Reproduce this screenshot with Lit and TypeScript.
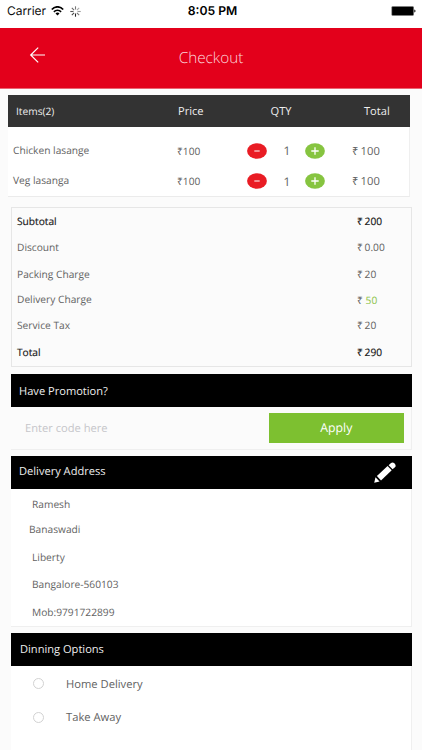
import { LitElement, html, css, svg } from "lit";
import { customElement } from "lit/decorators.js";

interface Item { name: string; price: string; qty: number; total: string; }
interface Charge { label: string; amount: string; strong?: boolean; green?: boolean; }

const items: Item[] = [
  { name: "Chicken lasange", price: "₹100", qty: 1, total: "100" },
  { name: "Veg lasanga", price: "₹100", qty: 1, total: "100" },
];

const charges: Charge[] = [
  { label: "Subtotal", amount: "200", strong: true },
  { label: "Discount", amount: "0.00" },
  { label: "Packing Charge", amount: "20" },
  { label: "Delivery Charge", amount: "50", green: true },
  { label: "Service Tax", amount: "20" },
  { label: "Total", amount: "290", strong: true },
];

const spokes = [0, 45, 90, 135, 180, 225, 270, 315];
const spokeShade = ["#777", "#aaa", "#999", "#777", "#222", "#444", "#555", "#666"];

@customElement("status-bar")
class StatusBar extends LitElement {
  static styles = css`
    :host { display: grid; grid-template-columns: 1fr auto 1fr; align-items: center; height: 28px; padding: 0 6px 6px 7px; box-sizing: border-box; background: #fff; color: #111; font: 12px/16px Inter, sans-serif; }
    .left { display: flex; align-items: center; }
    .carrier { letter-spacing: -0.05px; }
    .wifi { margin-left: 5px; }
    .spin { margin-left: 6px; }
    .time { font-weight: 600; font-size: 12.2px; color: #000; padding-left: 2px; }
    .battery { justify-self: end; }
    svg { display: block; }
  `;
  render() {
    return html`
      <div class="left">
        <span class="carrier">Carrier</span>
        <svg class="wifi" width="13" height="10" viewBox="0 0 13 10">
          <g fill="none" stroke="#000" stroke-width="1.7">
            <path d="M.8 3.5C4-.1 9-.1 12.2 3.5"/>
            <path d="M2.9 5.8c2-2.1 5.2-2.1 7.2 0"/>
          </g>
          <path d="M6.5 9.6 4.5 7.4c1.1-1.1 2.9-1.1 4 0z"/>
        </svg>
        <svg class="spin" width="11" height="11" viewBox="0 0 11 11">
          ${spokes.map((a, i) => svg`<path d="M5.5 .3V3.5" stroke=${spokeShade[i]} stroke-width="1.1" transform="rotate(${a} 5.5 5.5)"/>`)}
        </svg>
      </div>
      <span class="time">8:05 PM</span>
      <svg class="battery" width="25" height="10" viewBox="0 0 25 10">
        <rect x=".5" y=".2" width="22.3" height="9.6" rx="1.2" fill="#555"/>
        <rect x="1.2" y=".9" width="20.9" height="8.2" rx=".6"/>
        <path d="M23.3 3.4q1.2.3 1.2 1.6t-1.2 1.6z"/>
      </svg>`;
  }
}

@customElement("app-root")
class AppRoot extends LitElement {
  static styles = css`
    :host { display: block; width: 422px; height: 750px; overflow: hidden; background: #fbfbfb; color: #626262; font: 10.2px/14px "Open Sans", sans-serif; text-rendering: geometricPrecision; }
    * { box-sizing: border-box; }
    svg { display: block; }
    .bar { display: grid; grid-template-columns: 60px 1fr 60px; height: 61px; background: #e3001b; border-bottom: 1px solid #ea6473; }
    .back { margin: 19px 0 0 29px; }
    .title { text-align: center; font-weight: 300; font-size: 15.3px; line-height: 60px; height: 60px; color: #fbd5d9; }
    .table { margin: 6px 12px 0 8px; height: 102px; background: #fff; border-bottom: 1px solid #ebebeb; border-right: 1px solid #efefef; }
    .thead { display: grid; grid-template-columns: 162px 92.5px 93.5px 1fr; width: 402px; height: 32px; padding: 1px 0 0 8px; background: #333; color: #eee; font-size: 11.1px; line-height: 31px; }
    .small { font-size: 10.2px; }
    .rows { padding-top: 8px; }
    .item { display: grid; grid-template-columns: 164px 70px 20px 38px 20px 27px 1fr; align-items: center; height: 31px; padding-left: 5px; }
    .item:last-child { height: 30px; }
    .name { padding-bottom: 2px; }
    .sum { padding-top: 2px; }
    .qty { text-align: center; font-size: 12px; padding: 1px 0 0 2px; }
    .sum { font-size: 11.2px; }
    .charges { display: grid; grid-template-rows: 26px 26px 27px 25px 26px 27px; margin: 10px 10px 0 11px; height: 160px; border: 1px solid #e6e6e6; }
    .charge { display: grid; grid-template-columns: 340px 1fr; align-items: center; padding-left: 5px; }
    .raised { padding-bottom: 2px; }
    .strong { color: #151515; -webkit-text-stroke: 0.15px #151515; }
    .green { color: #8bc34a; padding-left: 1px; }
    .rs { display: inline-block; width: 7.6px; }
    .sum .rs { width: 8.6px; }
    .card { margin: 7px 10px 0 11px; border: solid #efefef; border-width: 0 1px 1px 0; }
    .head { display: flex; justify-content: space-between; align-items: center; width: 401px; height: 33px; padding: 2px 16px 0 8px; background: #000; color: #eee; font-size: 11.1px; line-height: 16px; }
    .promo { height: 76px; margin-top: 7px; }
    .promo .form { display: flex; justify-content: space-between; height: 42px; padding: 6px 7px 7px 14px; }
    .hint { font-size: 11.15px; line-height: 31px; color: #c6c6ca; }
    .apply { width: 135.5px; height: 30px; background: #7dc030; color: #fff; font-size: 12.3px; line-height: 30px; text-align: center; }
    .address { height: 171px; background: #fff; margin-top: 6px; }
    .address .head { padding-top: 0; }
    .address .label { padding-bottom: 1px; }
    .lines { display: flex; flex-direction: column; padding: 1px 0 0 21px; }
    .line { height: 28px; line-height: 28px; }
    .second { margin-left: -3px; height: 25px; line-height: 23px; }
    .fourth { height: 27px; line-height: 27px; }
    .dining { height: 130px; background: #fff; margin-top: 6px; }
    .dining .head { padding: 1px 0 0 9px; }
    .option { display: flex; align-items: center; height: 33px; padding-left: 22px; font-size: 11.2px; }
    .options { padding-top: 2px; }
    .radio { width: 11px; height: 11px; border: 1px solid #d2d2d2; border-radius: 50%; margin: -2px 22px 0 0; }
    .option:last-child .radio { margin-top: 0; }
  `;

  private round(color: string, plus: boolean) {
    return html`<svg width="20" height="16" viewBox="0 0 20 16">
      <ellipse cx="10" cy="8" rx="9.9" ry="7.8" fill=${color}/>
      <path d=${plus ? "M6.3 8h7.4M10 4.3v7.4" : "M7.3 8h5.4"} stroke="#fff" stroke-width=${plus ? 1.3 : 1} fill="none"/>
    </svg>`;
  }

  render() {
    return html`
      <status-bar></status-bar>
      <div class="bar">
        <svg class="back" width="17" height="16" viewBox="0 0 17 16">
          <path d="M16 8H1.7M9.2.6 1.7 8l7.5 7.4" fill="none" stroke="#fff" stroke-width="1.2"/>
        </svg>
        <div class="title">Checkout</div>
      </div>

      <div class="table">
        <div class="thead"><span class="small">Items(2)</span><span>Price</span><span>QTY</span><span>Total</span></div>
        <div class="rows">
          ${items.map((i) => html`<div class="item">
            <span class="name">${i.name}</span><span class="price">${i.price}</span>
            ${this.round("#e91c24", false)}<span class="qty">${i.qty}</span>${this.round("#86c440", true)}
            <span></span><span class="sum"><span class="rs">₹</span>${i.total}</span>
          </div>`)}
        </div>
      </div>

      <div class="charges">
        ${charges.map((c) => html`<div class="charge ${c.strong ? "strong" : ""}">
          <span class=${c.green ? "raised" : ""}>${c.label}</span>
          <span><span class="rs">₹</span><span class=${c.green ? "green" : ""}>${c.amount}</span></span>
        </div>`)}
      </div>

      <div class="card promo">
        <div class="head">Have Promotion?</div>
        <div class="form"><span class="hint">Enter code here</span><span class="apply">Apply</span></div>
      </div>

      <div class="card address">
        <div class="head"><span class="label">Delivery Address</span>
          <svg width="22" height="21" viewBox="0 0 22 21" fill="#fff">
            <path d="M.2 20.8 1.5 15.3 5.6 19.4z"/>
            <path d="M2.9 14.1 13.6 4.1 17.7 8.2 7 18.4z"/>
            <path d="M14.6 3.2 17 1q1.7-1.3 3.4.3 2 2 .8 3.8L18.6 7.3z"/>
          </svg>
        </div>
        <div class="lines">
          <span class="line">Ramesh</span><span class="line second">Banaswadi</span><span class="line">Liberty</span>
          <span class="line fourth">Bangalore-560103</span><span class="line">Mob:9791722899</span>
        </div>
      </div>

      <div class="card dining">
        <div class="head">Dinning Options</div>
        <div class="options">
          <div class="option"><span class="radio"></span>Home Delivery</div>
          <div class="option"><span class="radio"></span>Take Away</div>
        </div>
      </div>`;
  }
}
